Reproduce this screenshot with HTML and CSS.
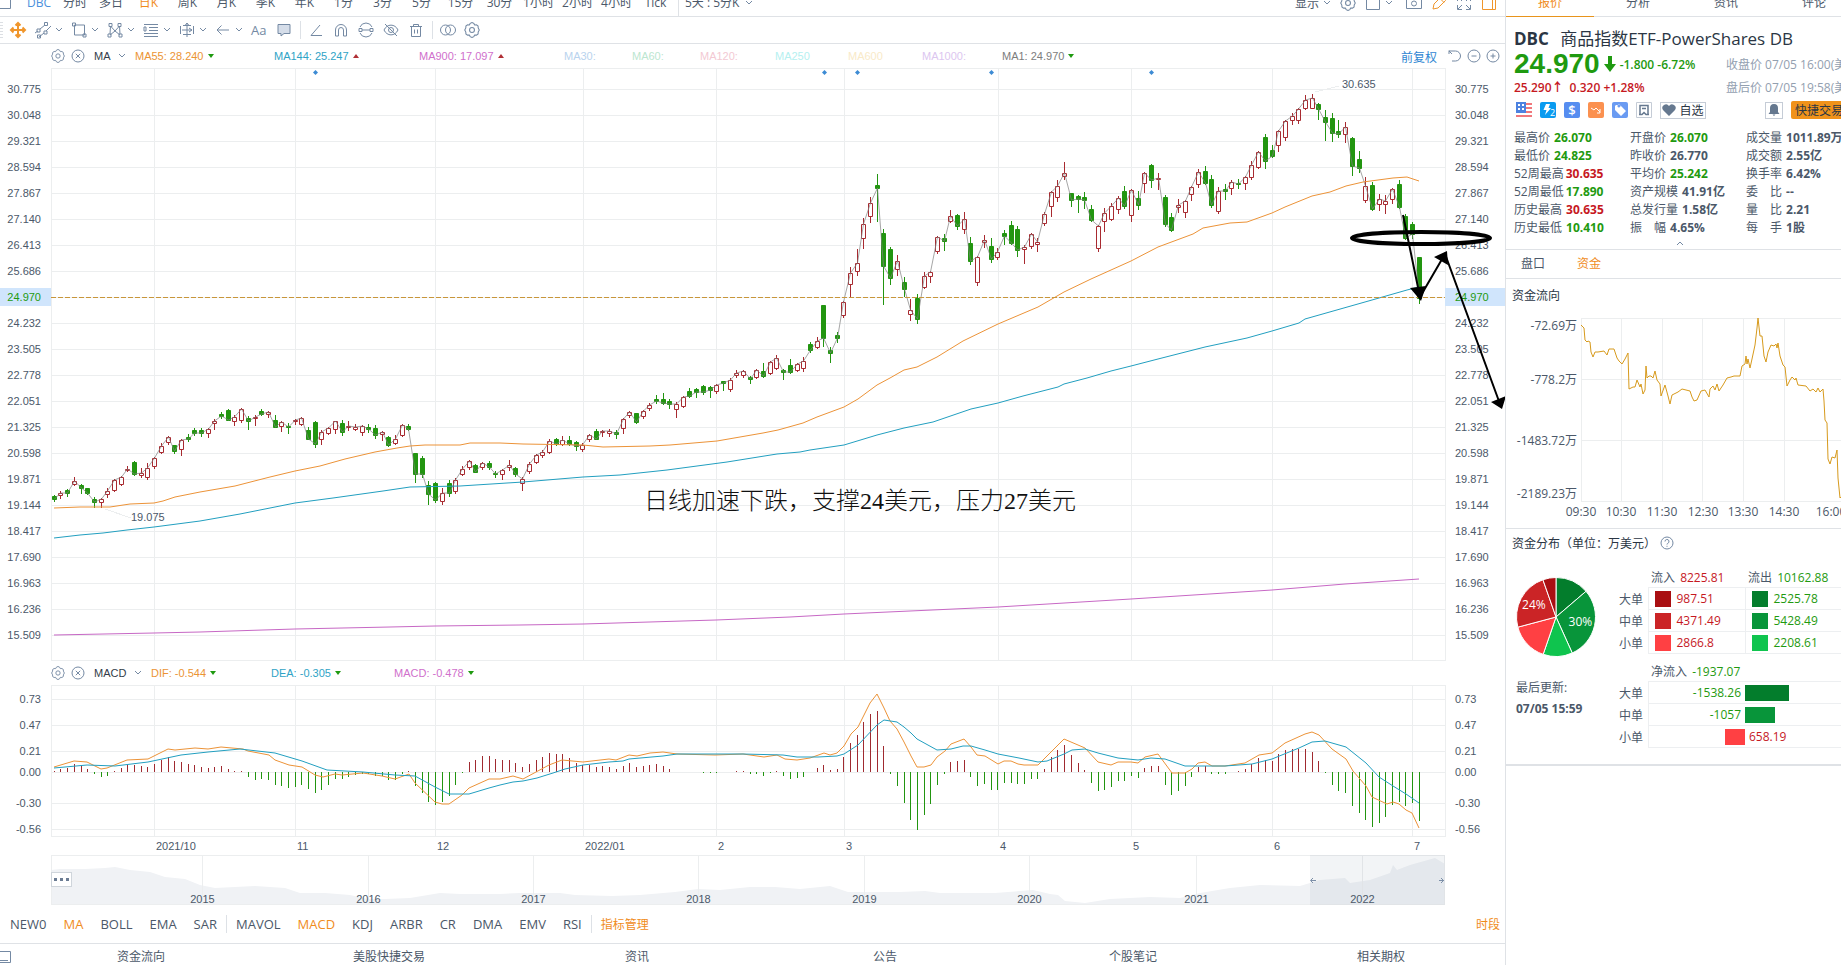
FILE: index.html
```html
<!DOCTYPE html>
<html lang="zh-CN">
<head>
  <meta charset="UTF-8">
  <meta name="viewport" content="width=device-width, initial-scale=1.0">
  <link rel="stylesheet" href="styles.css">
  <title>DBC 商品指数ETF-PowerShares DB</title>
</head>
<body>

<svg class="sprite" aria-hidden="true">
  <symbol id="chevron" viewBox="0 0 8 6"><path d="M1 1l3 3 3-3"/></symbol>
  <symbol id="gear" viewBox="0.5 0.5 15 15"><path d="M6.300 1.800 8 1l1.700.8.8 1.500 1.700-.1 1.500 1 .1 1.800 1 2-1 2-.1 1.800-1.500 1-1.700-.1-.8 1.500L8 15l-1.700-.8-.8-1.500-1.700.1-1.500-1-.1-1.800-1-2 1-2 .1-1.800 1.500-1 1.700.1z"/><circle cx="8" cy="8" r="2.300"/></symbol>
  <symbol id="close" viewBox="0 0 14 14"><circle cx="7" cy="7" r="6"/><path d="M4.800 4.800l4.400 4.400M9.200 4.800L4.800 9.200"/></symbol>
</svg>

<div class="app">
  <main class="main">
    <nav class="topbar">
      <svg class="corner" viewBox="0 0 12 28"><path d="M0 8.500h10.500v12H0"/></svg>
      <button class="period narrow blue">DBC</button>
      <button class="period narrow">分时</button>
      <button class="period narrow">多日</button>
      <button class="period active">日K</button>
      <button class="period">周K</button>
      <button class="period">月K</button>
      <button class="period">季K</button>
      <button class="period">年K</button>
      <button class="period">1分</button>
      <button class="period">3分</button>
      <button class="period">5分</button>
      <button class="period">15分</button>
      <button class="period">30分</button>
      <button class="period">1小时</button>
      <button class="period">2小时</button>
      <button class="period">4小时</button>
      <button class="period">Tick</button>
      <button class="period custom">5天 : 5分K <svg class="chev"><use href="#chevron"/></svg></button>
      <div class="top-right">
        <button>显示 <svg class="chev"><use href="#chevron"/></svg></button>
        <button aria-label="设置"><svg class="ic"><use href="#gear"/></svg></button>
        <button class="layout" aria-label="布局"><svg class="ic" viewBox="0 0 16 16"><path d="M1.500 1.500h13v13h-13z"/></svg> <svg class="chev"><use href="#chevron"/></svg></button>
        <button aria-label="截图"><svg class="ic" viewBox="0 0 16 16"><path d="M.5 3.500h4l1-2h5l1 2h4v10H.5z"/><circle cx="8" cy="8.500" r="2.500"/></svg></button>
        <button aria-label="画线"><svg class="ic orange" viewBox="0 0 16 16"><path d="M2 14l1-5 7.500-7.500a2 2 0 0 1 3 0l1 1a2 2 0 0 1 0 3L7 13zM9 3.500l4 4"/></svg></button>
        <button aria-label="全屏"><svg class="ic" viewBox="0 0 16 16"><path d="M1.500 6V1.500H6M10 1.500h4.500V6M14.500 10v4.500H10M6 14.500H1.500V10M2 2l4 4M14 2l-4 4M14 14l-4-4M2 14l4-4"/></svg></button>
        <button aria-label="侧栏"><svg class="ic orange" viewBox="0 0 16 16"><path d="M1.500 1.500h13v13h-13zM11.500 1.500v13"/></svg></button>
      </div>
    </nav>

    <div class="toolbar">
      <span class="grip"></span>
      <button class="tool move" aria-label="移动"><svg class="ti orange" viewBox="0 0 18 18"><path d="M9 2v14M2 9h14M6.500 4.500L9 2l2.500 2.500M6.500 13.500L9 16l2.500-2.500M4.500 6.500L2 9l2.500 2.500M13.500 6.500L16 9l-2.500 2.500"/></svg></button>
      <button class="tool drop" aria-label="线段"><svg class="ti" viewBox="0 0 18 18"><path d="M1 12l3-2M6 8l5-4M5 16l5-4M12 10l5-5M3 8h3v3H3zM10.500 1.500h3v3h-3zM3.500 14h3v3h-3zM10 10h3v3h-3z"/></svg><svg class="chev"><use href="#chevron"/></svg></button>
      <button class="tool drop" aria-label="形状"><svg class="ti" viewBox="0 0 18 18"><path d="M4.500 4h10v10h-10zM2.500 2h3v3h-3zM13 13h3v3h-3z"/></svg><svg class="chev"><use href="#chevron"/></svg></button>
      <button class="tool drop" aria-label="形态"><svg class="ti" viewBox="0 0 18 18"><path d="M4 13L4.500 5 9 10l4.500-5 .5 8M4 14l5-4 5 4M3 2.500h3v3H3zM12 2.500h3v3h-3zM2 13h3v3H2zM13 13h3v3h-3z"/></svg><svg class="chev"><use href="#chevron"/></svg></button>
      <button class="tool drop" aria-label="斐波那契"><svg class="ti" viewBox="0 0 18 18"><path d="M2 3.500h14M7 6.500h9M7 9.500h9M2 12.500h14M2 15.500h14M2 6h2v4H2z"/></svg><svg class="chev"><use href="#chevron"/></svg></button>
      <button class="tool drop" aria-label="测量"><svg class="ti" viewBox="0 0 18 18"><path d="M2.500 5v8M15.500 5v8M4 9h10M9 2v14M5 4.500h8M5 13.500h8M11 7l3 2-3 2M7 4.500L9 2l2 2.500"/></svg><svg class="chev"><use href="#chevron"/></svg></button>
      <button class="tool drop" aria-label="箭头"><svg class="ti" viewBox="0 0 18 18"><path d="M15 9H3M7.500 4.500L3 9l4.500 4.500"/></svg><svg class="chev"><use href="#chevron"/></svg></button>
      <button class="tool text">Aa</button>
      <button class="tool" aria-label="批注"><svg class="ti fill" viewBox="0 0 18 18"><path d="M3 3.500h12v9H9l-3 2.500v-2.500H3z"/></svg></button>
      <span class="sep"></span>
      <button class="tool" aria-label="角度"><svg class="ti" viewBox="0 0 18 18"><path d="M13 4L4 14.500h11"/></svg></button>
      <button class="tool" aria-label="磁铁"><svg class="ti" viewBox="0 0 18 18"><path d="M3.500 15V9a5.500 5.500 0 0 1 11 0v6h-3V9a2.500 2.500 0 0 0-5 0v6z"/></svg></button>
      <button class="tool" aria-label="连续画线"><svg class="ti" viewBox="0 0 18 18"><path d="M3 6a6.500 6.500 0 0 1 12 0M15 12a6.500 6.500 0 0 1-12 0M5 9h8M2 7.500h3v3H2zM13 7.500h3v3h-3z"/></svg></button>
      <button class="tool" aria-label="隐藏"><svg class="ti" viewBox="0 0 18 18"><path d="M2 9c3-6.500 11-6.500 14 0-3 6.500-11 6.500-14 0zM3 3l12 12"/><circle cx="9" cy="9" r="2.500"/></svg></button>
      <button class="tool" aria-label="删除"><svg class="ti" viewBox="0 0 18 18"><path d="M3 5.500h12M6.500 5.500v-2h5v2M4.500 5.500v10h9v-10M7.500 8.500v4M10.500 8.500v4"/></svg></button>
      <span class="sep"></span>
      <button class="tool" aria-label="对比"><svg class="ti" viewBox="0 0 18 18"><circle cx="6.500" cy="9" r="5"/><circle cx="11.500" cy="9" r="5"/></svg></button>
      <button class="tool" aria-label="设置"><svg class="ic"><use href="#gear"/></svg></button>
    </div>

    <div class="legend">
      <button aria-label="设置"><svg class="ic small"><use href="#gear"/></svg></button>
      <button aria-label="关闭"><svg class="ic small"><use href="#close"/></svg></button>
      <label class="picker"><select aria-label="主图指标"><option>MA</option></select><svg class="chev"><use href="#chevron"/></svg></label>
      <div class="values ma">
        <span class="c-orange">MA55: 28.240 <i class="down"></i></span>
        <span class="c-cyan">MA144: 25.247 <i class="up"></i></span>
        <span class="c-violet">MA900: 17.097 <i class="up"></i></span>
        <span class="ma30">MA30:</span>
        <span class="ma60">MA60:</span>
        <span class="ma120">MA120:</span>
        <span class="ma250">MA250</span>
        <span class="ma600">MA600</span>
        <span class="ma1000">MA1000:</span>
        <span class="c-gray">MA1: 24.970 <i class="down"></i></span>
      </div>
      <div class="zoom">
        <button class="adjust">前复权</button>
        <button aria-label="重置"><svg class="ic small" viewBox="0 0 14 14"><path d="M1 2h6.500a5 5 0 0 1 0 10H4M1 1.500V5M1 2l3 3"/></svg></button>
        <button aria-label="缩小"><svg class="ic small" viewBox="0 0 14 14"><circle cx="7" cy="7" r="6"/><path d="M4.500 7h5"/></svg></button>
        <button aria-label="放大"><svg class="ic small" viewBox="0 0 14 14"><circle cx="7" cy="7" r="6"/><path d="M4.500 7h5M7 4.500v5"/></svg></button>
      </div>
    </div>

    <svg id="price" class="chart" viewBox="0 68 1505 593"></svg>

    <div class="legend">
      <button aria-label="设置"><svg class="ic small"><use href="#gear"/></svg></button>
      <button aria-label="关闭"><svg class="ic small"><use href="#close"/></svg></button>
      <label class="picker"><select aria-label="副图指标"><option>MACD</option></select><svg class="chev"><use href="#chevron"/></svg></label>
      <div class="values macd">
        <span class="c-orange">DIF: -0.544 <i class="down"></i></span>
        <span class="c-cyan">DEA: -0.305 <i class="down"></i></span>
        <span class="c-violet">MACD: -0.478 <i class="down"></i></span>
      </div>
    </div>

    <svg id="macd" class="chart" viewBox="0 685 1505 170"></svg>
    <svg id="navigator" class="chart" viewBox="0 855 1505 52"></svg>

    <div class="indicators">
      <button>NEW0</button>
      <button class="active">MA</button>
      <button>BOLL</button>
      <button>EMA</button>
      <button>SAR</button>
      <span class="sep"></span>
      <button>MAVOL</button>
      <button class="active">MACD</button>
      <button>KDJ</button>
      <button>ARBR</button>
      <button>CR</button>
      <button>DMA</button>
      <button>EMV</button>
      <button>RSI</button>
      <span class="sep"></span>
      <button class="active manage">指标管理</button>
      <button class="active manage session">时段</button>
    </div>

    <nav class="bottom-tabs">
      <svg class="corner" viewBox="0 0 17 27"><path d="M0 7.500h10.500v11H0M0 16.500h8"/></svg>
      <a href="#">资金流向</a>
      <a href="#">美股快捷交易</a>
      <a href="#">资讯</a>
      <a href="#">公告</a>
      <a href="#">个股笔记</a>
      <a href="#">相关期权</a>
    </nav>
  </main>

  <aside class="side">
    <div class="side-inner">
      <nav class="side-tabs">
        <a href="#" class="active">报价</a>
        <a href="#">分析</a>
        <a href="#">资讯</a>
        <a href="#">评论</a>
      </nav>

      <section class="quote">
        <h1><b>DBC</b> 商品指数ETF-PowerShares DB</h1>
        <div class="last green">
          <b>24.970</b>
          <svg viewBox="0 0 12 16"><path d="M4 0h4v8h4l-6 8-6-8h4z"/></svg>
          <span>-1.800 -6.72%</span>
          <time>收盘价 07/05 16:00(美东)</time>
        </div>
        <div class="after red">
          <span>25.290↑</span><span>0.320 +1.28%</span>
          <time>盘后价 07/05 19:58(美东)</time>
        </div>
        <div class="badges">
          <svg viewBox="0 0 16 16"><path fill="#fff" d="M0 0h16v16H0z"/><path fill="#f0787c" d="M10 1h6v2h-6zM10 5h6v2h-6zM10 9h6v2h-6zM0 13h16v2H0z"/><path fill="#4d82e0" d="M0 0h10v11H0z"/><path fill="#fff" d="M2 2h2v2H2zM6 2h2v2H6zM2 6h2v2H2zM6 6h2v2H6z"/></svg>
          <svg viewBox="0 0 16 16"><rect width="16" height="16" rx="2" fill="#0a9bf0"/><path fill="#fff" d="M6 2h4L8.500 6H11l-6 7 1.500-5H3.500z"/><text x="10" y="14" font-size="9" fill="#fff">2</text></svg>
          <svg viewBox="0 0 16 16"><rect width="16" height="16" rx="2" fill="#568df0"/><text x="8" y="13" text-anchor="middle" font-size="13" font-weight="600" fill="#fff">$</text></svg>
          <svg viewBox="0 0 16 16"><rect width="16" height="16" rx="2" fill="#fb9150"/><path d="M3 6l3 2 2-2 4 4M12 7v4H9" fill="none" stroke="#fff"/></svg>
          <svg viewBox="0 0 16 16"><rect width="16" height="16" rx="2" fill="#6a9bf2"/><path fill="#fff" fill-rule="evenodd" d="M3 4l1-1h4l6 6-5 5-6-6zM7 5.500a1.500 1.500 0 1 0-.1 0z"/></svg>
          <svg viewBox="0 0 16 16"><path d="M.5.5h15v15H.5z" fill="#fff" stroke="#c5ccd6"/><path d="M4 12V3.500h8V12M3 12.500h3l2-2 2 2h3M6 6.500h4" fill="none" stroke="#65788f" stroke-width="1.500"/></svg>
          <button class="fav"><svg viewBox="0 0 14 12"><path fill="#65788f" d="M7 12L1 6a3.400 3.400 0 0 1 6-4 3.400 3.400 0 0 1 6 4z"/></svg>自选</button>
          <button class="bell" aria-label="提醒"><svg viewBox="0 0 12 12"><path fill="#65788f" d="M6 0c3 0 4 2 4 4v4l1.500 2H.5L2 8V4c0-2 1-4 4-4zM4.500 10.500h3L6 12z"/></svg></button>
          <button class="trade">快捷交易</button>
        </div>

        <dl class="stats">
          <div><dt>最高价</dt><dd class="green">26.070</dd></div>
          <div><dt>开盘价</dt><dd class="green">26.070</dd></div>
          <div><dt>成交量</dt><dd>1011.89万</dd></div>
          <div><dt>最低价</dt><dd class="green">24.825</dd></div>
          <div><dt>昨收价</dt><dd>26.770</dd></div>
          <div><dt>成交额</dt><dd>2.55亿</dd></div>
          <div class="tight"><dt>52周最高</dt><dd class="red">30.635</dd></div>
          <div><dt>平均价</dt><dd class="green">25.242</dd></div>
          <div><dt>换手率</dt><dd>6.42%</dd></div>
          <div class="tight"><dt>52周最低</dt><dd class="green">17.890</dd></div>
          <div><dt>资产规模</dt><dd>41.91亿</dd></div>
          <div><dt>委&emsp;比</dt><dd>--</dd></div>
          <div><dt>历史最高</dt><dd class="red">30.635</dd></div>
          <div><dt>总发行量</dt><dd>1.58亿</dd></div>
          <div><dt>量&emsp;比</dt><dd>2.21</dd></div>
          <div><dt>历史最低</dt><dd class="green">10.410</dd></div>
          <div><dt>振&emsp;幅</dt><dd>4.65%</dd></div>
          <div><dt>每&emsp;手</dt><dd>1股</dd></div>
        </dl>
        <button class="collapse" aria-label="收起"><svg class="chev flip"><use href="#chevron"/></svg></button>
      </section>

      <nav class="sub-tabs">
        <a href="#">盘口</a>
        <a href="#" class="active">资金</a>
      </nav>

      <section class="flow">
        <h2>资金流向</h2>
        <svg id="flow" class="chart" viewBox="1506 311 352 217"></svg>
      </section>

      <section class="dist">
        <h2>资金分布（单位：万美元） <svg class="help" viewBox="0 0 14 14"><circle cx="7" cy="7" r="6"/><path d="M5 5.500a2 2 0 1 1 2.800 1.800c-.6.300-.8.600-.8 1.200M7 9.800v1"/></svg></h2>
        <div class="dist-body">
          <div class="dist-left">
            <svg id="pie" viewBox="-40 -40 80 80"></svg>
            <p>最后更新:</p>
            <p><b>07/05 15:59</b></p>
          </div>
          <div class="dist-right">
            <table>
              <colgroup><col class="col-name"><col class="col-in"><col></colgroup>
              <thead>
                <tr><th></th><th>流入 <span class="red">8225.81</span></th><th>流出 <span class="green">10162.88</span></th></tr>
              </thead>
              <tbody>
                <tr><th>大单</th><td class="red"><i class="sw r1"></i>987.51</td><td class="green"><i class="sw g1"></i>2525.78</td></tr>
                <tr><th>中单</th><td class="red"><i class="sw r2"></i>4371.49</td><td class="green"><i class="sw g2"></i>5428.49</td></tr>
                <tr><th>小单</th><td class="red"><i class="sw r3"></i>2866.8</td><td class="green"><i class="sw g3"></i>2208.61</td></tr>
              </tbody>
            </table>
            <table class="net">
              <colgroup><col class="col-name"><col class="col-in"><col></colgroup>
              <thead>
                <tr><th></th><th colspan="2">净流入 <span class="green">-1937.07</span></th></tr>
              </thead>
              <tbody>
                <tr><th>大单</th><td class="neg green">-1538.26</td><td><i class="bar g1" style="width:44px"></i></td></tr>
                <tr><th>中单</th><td class="neg green">-1057</td><td><i class="bar g2" style="width:30px"></i></td></tr>
                <tr><th>小单</th><td class="neg"><i class="bar r3" style="width:20px"></i></td><td class="pos red">658.19</td></tr>
              </tbody>
            </table>
          </div>
        </div>
      </section>
    </div>
  </aside>
</div>

<script src="script.js"></script>
</body>
</html>
```
FILE: styles.css
```css
* {
  box-sizing: border-box;
}

body {
  margin: 0;
  font-family: "Open Sans", "Noto Sans CJK SC", sans-serif;
  font-size: 12px;
  color: #4b5869;
  background-color: #fff;
}

button,
select {
  border: none;
  padding: 0;
  margin: 0;
  background: none;
  font: inherit;
  color: inherit;
  cursor: pointer;
}

a {
  color: inherit;
  text-decoration: none;
}

i {
  font-style: normal;
}

svg {
  display: block;
  flex: none;
}

h1, h2, p, dl, dd {
  margin: 0;
}

.sprite {
  position: absolute;
  width: 0;
  height: 0;
}

.app {
  display: flex;
  height: 100vh;
  overflow: hidden;
}

.main {
  flex: 1;
  min-width: 0;
}

.green { color: #1f9a10; }
.red { color: #c6191f; }
.c-orange { color: #eb9434; }
.c-cyan { color: #2fa3c6; }
.c-violet { color: #d070cc; }
.c-gray { color: #7d7d7d; }

/* icons */
.ic, .ti, .chev, .corner, .help {
  fill: none;
  stroke: #7489a3;
  stroke-width: 1;
}

.ic { width: 16px; height: 16px; }
.ic.small { width: 14px; height: 14px; }
.ti { width: 18px; height: 18px; }
.chev { width: 8px; height: 6px; }
.chev.flip { transform: rotate(180deg); }
.orange { stroke: #f0962c; }
.ti.orange { stroke-width: 2; }
.ti.fill { fill: #d5dde9; }

.sep {
  width: 1px;
  height: 18px;
  background-color: #dde1e6;
}

/* period bar, scrolled partly out of view */
.topbar {
  display: flex;
  align-items: flex-end;
  height: 17px;
  overflow: hidden;
  border-bottom: 1px solid #dfe2e6;
}

.topbar .corner {
  width: 12px;
  height: 28px;
  margin-right: 9px;
}

.period {
  width: 39px;
  line-height: 26px;
  flex: none;
  white-space: nowrap;
}

.period.narrow { width: 36px; }
.period.blue { color: #4a90dc; }
.period.active { color: #f08c1c; }

.period.custom {
  display: flex;
  align-items: center;
  gap: 6px;
  width: auto;
  margin-left: 3px;
  padding-left: 6px;
  border-left: 1px solid #dfe2e6;
}

.top-right {
  display: flex;
  align-items: center;
  gap: 9px;
  height: 26px;
  margin-left: auto;
  padding-right: 8px;
}

.top-right button {
  display: flex;
  align-items: center;
  gap: 4px;
}

.top-right .layout { margin-right: 4px; }

.toolbar {
  display: flex;
  align-items: center;
  height: 27px;
  border-bottom: 1px solid #dfe2e6;
}

.grip {
  width: 3px;
  height: 16px;
  margin-right: 6px;
  background: repeating-linear-gradient(#dcdfe3 0 1px, #fff 1px 3px);
}

.tool {
  display: flex;
  align-items: center;
  width: 25px;
}

.tool.drop {
  width: 36px;
  gap: 3px;
}

.tool.text {
  padding-left: 1px;
  color: #7489a3;
  font-size: 13px;
}

.toolbar .sep {
  margin-right: 6px;
}

/* legends */
.legend {
  display: flex;
  align-items: center;
  gap: 6px;
  height: 24px;
  padding: 0 5px 0 51px;
  font-family: "Liberation Sans", "Noto Sans CJK SC", sans-serif;
  font-size: 11px;
}

.picker {
  display: flex;
  align-items: center;
  gap: 7px;
  margin-left: 3px;
}

.picker select {
  appearance: none;
  color: #333c49;
}

.values {
  display: grid;
  margin-left: 3px;
  white-space: nowrap;
}

.values.ma { grid-template-columns: 139px 145px 145px 68px 68px 75px 73px 74px 80px auto; }
.values.macd { grid-template-columns: 120px 123px auto; }

.up, .down {
  display: inline-block;
  margin: 0 0 2px 1px;
  border: 3px solid transparent;
}

.up { border-top: 0; border-bottom: 4px solid #b02f35; }
.down { border-bottom: 0; border-top: 4px solid #1f9a10; }

.ma30 { color: #b9d3ee; }
.ma60 { color: #bce6d0; }
.ma120 { color: #f3c9d3; }
.ma250 { color: #b5f0f0; }
.ma600 { color: #f9eac8; }
.ma1000 { color: #dcc6f0; }

.zoom {
  display: flex;
  align-items: center;
  gap: 5px;
  margin-left: auto;
}

.zoom .adjust {
  margin-right: 6px;
  font-size: 12px;
  color: #2f86d2;
}

/* charts */
.chart {
  width: 100%;
  height: auto;
  overflow: visible;
}

.chart text {
  font-family: "Liberation Sans", sans-serif;
  font-size: 11px;
  fill: #4b5869;
}

.chart .end { text-anchor: end; }
.chart .mid { text-anchor: middle; }
.chart .now { fill: #1f9a10; }

.chart .note {
  font-family: "Liberation Serif", "Noto Sans CJK SC", serif;
  font-size: 24px;
  font-weight: 300;
  fill: #111;
}

#flow text {
  font-family: "Open Sans", "Noto Sans CJK SC", sans-serif;
  font-size: 12px;
}

.grid { fill: none; stroke: #eceeef; shape-rendering: crispEdges; }
.line { fill: none; stroke-width: 1; }
.l-ma { stroke: #ec9338; }
.l-slow { stroke: #229fc0; }
.l-long { stroke: #c768c5; }
.l-close { stroke: #808080; stroke-opacity: 0.7; }
.l-flow { stroke: #d79a1c; }
.l-last { stroke: #c8963a; stroke-dasharray: 5 2; }
.k-up { fill: none; stroke: #a82a30; }
.k-down { fill: #229510; stroke: #229510; }
.bars-up { stroke: #a02a30; fill: none; }
.bars-down { stroke: #229510; fill: none; }
.band { fill: #d0e5fc; }
.area { fill: #f0f2f5; }
.range { fill: #8296aa; fill-opacity: 0.1; }
.handle { fill: #fff; stroke: #cfd5db; }
.draw { fill: none; stroke: #000; stroke-width: 2; }
.draw.ring { stroke-width: 4; }
.draw-head { fill: #000; }

/* indicator switches */
.indicators {
  display: flex;
  align-items: center;
  gap: 17px;
  height: 37px;
  padding: 0 5px 2px 10px;
  border-bottom: 1px solid #dfe2e6;
  font-size: 13px;
}

.indicators .sep { margin: 0 -8px; }
.indicators .active { color: #f08c1c; }
.indicators .manage { font-size: 12px; }
.indicators .session { margin-left: auto; }

.bottom-tabs {
  display: flex;
  height: 27px;
  line-height: 26px;
}

.bottom-tabs .corner {
  width: 17px;
  height: 27px;
}

.bottom-tabs a {
  flex: 1;
  text-align: center;
}

/* side panel */
.side {
  flex: 0 0 336px;
  overflow: hidden;
  border-left: 1px solid #dfe2e6;
}

.side-inner {
  width: 352px;
}

.side-tabs {
  display: flex;
  align-items: flex-end;
  height: 17px;
  overflow: hidden;
}

.side-tabs a {
  flex: 1;
  line-height: 26px;
  text-align: center;
  border-bottom: 1px solid #dfe2e6;
}

.side-tabs .active,
.sub-tabs .active {
  color: #f08c1c;
}

.side-tabs .active { border-bottom-color: #e8941c; }

.quote {
  padding: 10px 0 0 8px;
  border-bottom: 1px solid #dfe2e6;
}

.quote h1 {
  line-height: 24px;
  font-size: 17px;
  font-weight: 400;
  color: #2b3644;
  white-space: nowrap;
}

.quote h1 b { margin-right: 7px; }

.last {
  display: flex;
  align-items: center;
  height: 26px;
  font-weight: 600;
}

.last b {
  font-family: "Liberation Sans", sans-serif;
  font-size: 28px;
}

.last svg {
  width: 12px;
  height: 16px;
  margin: 0 4px;
  fill: #1f9a10;
}

.after {
  display: flex;
  align-items: center;
  gap: 6px;
  height: 20px;
  font-weight: 600;
}

.quote time {
  position: absolute;
  margin-left: 212px;
  font-weight: 400;
  color: #93a0b0;
  white-space: nowrap;
}

.badges {
  display: flex;
  align-items: center;
  gap: 8px;
  height: 26px;
  padding-left: 2px;
}

.badges > svg {
  width: 16px;
  height: 16px;
}

.badges button {
  display: flex;
  align-items: center;
  justify-content: center;
  height: 17px;
  border: 1px solid #c5ccd6;
  color: #2b3644;
}

.fav { width: 46px; gap: 3px; }
.fav svg { width: 14px; height: 12px; }
.bell { width: 18px; margin-left: 51px; }
.bell svg { width: 12px; height: 12px; }

.badges .trade {
  width: 56px;
  height: 18px;
  border: none;
  border-radius: 2px;
  background-color: #f0921a;
}

.stats {
  display: grid;
  grid-template-columns: 116px 116px 1fr;
  margin-top: 6px;
}

.stats div {
  display: flex;
  gap: 4px;
  line-height: 18px;
  white-space: nowrap;
}

.stats .tight { gap: 2px; }
.stats dd { font-weight: 700; }

.collapse {
  display: block;
  width: 100%;
  height: 12px;
  padding-left: 162px;
}

.sub-tabs {
  display: flex;
  gap: 32px;
  padding-left: 15px;
  line-height: 28px;
  border-bottom: 1px solid #dfe2e6;
}

.side h2 {
  display: flex;
  align-items: center;
  height: 32px;
  padding-left: 6px;
  font-size: 12px;
  font-weight: 400;
  color: #2b3644;
}

.flow { border-bottom: 1px solid #dfe2e6; }

.dist {
  padding-bottom: 16px;
  border-bottom: 2px solid #dfe2e6;
}

.side .dist h2 { height: 28px; }

.help {
  width: 14px;
  height: 14px;
  margin-left: 4px;
}

.dist-body {
  display: flex;
}

.dist-left {
  width: 113px;
  padding: 20px 0 0 10px;
  line-height: 21px;
}

#pie {
  width: 80px;
  height: 80px;
  margin-bottom: 20px;
}

#pie path { stroke: #fff; stroke-width: 1; }
#pie text { fill: #fff; font-size: 12px; text-anchor: middle; }

.dist-right {
  flex: 1;
  padding-top: 12px;
}

table {
  width: 100%;
  table-layout: fixed;
  border-collapse: collapse;
  white-space: nowrap;
}

.col-name { width: 29px; }
.col-in { width: 97px; }

table.net { margin-top: 9px; }

th, td {
  height: 22px;
  padding: 0;
  line-height: 18px;
  text-align: left;
  font-weight: 400;
}

thead th { height: 18px; }
thead th + th { padding-left: 3px; }
thead span { margin-left: 2px; }
tbody th { padding-top: 3px; }

tbody td {
  border: 1px solid #edeff1;
}

.net td { border-left: none; }

.net .neg {
  padding-right: 4px;
  text-align: right;
  border-left: 1px solid #edeff1;
  border-right: none;
}

.net .pos { padding-left: 4px; }

.sw, .bar {
  display: inline-block;
  width: 16px;
  height: 16px;
  vertical-align: middle;
}

.sw { margin: 0 6px; }
.net .neg .bar { margin-right: -4px; }

.r1 { background-color: #a90f12; }
.r2 { background-color: #cb2426; }
.r3 { background-color: #ff4043; }
.g1 { background-color: #037d2c; }
.g2 { background-color: #08953a; }
.g3 { background-color: #0fc44e; }
```
FILE: script.js
```js
// [high, body top, body bottom, low, 1 = up day] on the chart's own vertical scale
const candles = [
  [495,496,499,501,0],[491,493,495,498,1],[489,490,493,496,0],[477,481,484,485,1],[484,485,488,493,0],
  [488,488,493,494,0],[497,499,502,507,0],[498,499,502,507,1],[488,491,494,497,1],[479,480,490,491,1],
  [476,477,484,485,1],[466,469,470,471,1],[461,462,474,475,0],[468,473,475,477,1],[463,468,477,479,1],
  [457,458,466,468,1],[443,446,452,453,1],[436,437,442,444,1],[445,445,451,453,0],[439,440,449,455,1],
  [434,437,439,441,0],[428,430,433,435,0],[428,430,433,436,0],[428,429,433,437,1],[419,421,423,429,1],
  [412,414,416,418,0],[409,410,420,420,0],[415,417,421,425,1],[408,409,420,422,1],[416,418,421,429,0],
  [415,417,418,425,1],[409,411,414,415,0],[411,412,414,417,1],[415,420,427,427,0],[421,422,426,431,1],
  [423,426,427,433,0],[419,420,421,424,1],[417,418,424,425,1],[427,430,439,439,0],[421,422,444,447,0],
  [430,432,439,444,1],[427,428,433,434,1],[421,421,429,433,1],[420,423,432,435,0],[421,426,427,430,1],
  [424,427,429,430,1],[425,426,432,435,1],[424,427,429,432,0],[425,428,435,438,0],[431,432,434,440,1],
  [436,437,445,446,0],[435,439,443,444,1],[424,425,435,436,1],[424,426,429,430,0],[453,453,474,482,0],
  [456,458,474,477,0],[481,485,494,504,0],[482,483,500,502,0],[488,493,501,504,1],[480,483,493,496,0],
  [478,480,491,493,1],[466,469,474,475,1],[460,461,467,469,1],[464,465,472,472,0],[462,463,467,469,1],
  [461,463,467,469,0],[471,473,474,477,0],[469,470,474,479,1],[460,465,467,470,1],[467,468,474,476,0],
  [477,479,483,490,1],[462,464,471,473,1],[454,455,462,463,1],[450,452,455,457,1],[439,441,452,453,1],
  [438,439,444,445,0],[436,440,444,445,1],[436,440,444,445,0],[441,442,446,450,0],[443,445,449,451,1],
  [434,435,439,441,1],[429,431,439,439,0],[430,431,432,436,1],[429,431,433,436,1],[430,432,434,438,0],
  [418,419,428,433,1],[411,412,415,417,1],[413,413,422,423,0],[410,411,416,418,1],[403,405,408,410,1],
  [395,399,401,403,0],[393,399,403,404,0],[399,401,404,408,0],[402,404,409,417,1],[396,397,406,407,1],
  [388,391,396,397,0],[388,389,392,397,0],[385,386,392,394,0],[386,387,390,397,0],[384,385,391,393,1],
  [381,381,383,390,0],[378,380,389,391,1],[370,373,375,377,1],[370,371,375,377,1],[376,377,379,383,0],
  [369,370,377,378,1],[363,371,376,377,0],[361,362,373,374,1],[355,358,368,369,1],[369,370,372,379,0],
  [359,365,372,373,0],[363,364,370,371,1],[357,361,368,371,1],[342,344,350,352,0],[337,341,347,348,1],
  [305,305,338,346,0],[347,350,353,362,0],[332,335,338,342,0],[301,302,315,317,1],[267,273,284,296,1],
  [249,263,271,275,1],[218,224,238,248,1],[197,203,216,222,1],[174,185,188,221,0],[229,233,266,304,0],
  [247,249,278,284,0],[255,261,269,275,1],[277,282,289,296,0],[299,310,314,320,1],[294,298,319,323,0],
  [272,276,287,288,1],[271,272,276,282,1],[236,237,251,253,1],[234,238,241,250,0],[210,216,221,222,1],
  [214,215,226,229,0],[212,219,229,233,1],[237,243,261,264,0],[256,257,282,285,1],[235,240,242,247,1],
  [238,246,259,262,0],[248,252,257,259,1],[230,233,236,244,0],[221,225,243,244,0],[226,229,250,256,0],
  [245,247,249,263,1],[233,234,246,248,1],[238,242,244,251,1],[212,214,223,225,1],[191,192,206,216,1],
  [180,186,197,201,1],[162,173,176,179,1],[193,193,200,206,0],[195,196,199,212,0],[192,197,200,208,0],
  [205,209,220,221,0],[225,226,248,251,1],[208,213,221,231,1],[203,206,219,220,1],[196,198,209,213,1],
  [186,191,206,208,0],[189,190,215,221,1],[191,198,205,209,0],[172,173,183,192,1],[164,165,180,187,0],
  [173,178,179,189,1],[195,197,224,226,0],[213,217,230,231,0],[199,205,207,212,1],[200,201,212,217,1],
  [186,187,194,200,1],[169,172,184,187,1],[166,171,183,184,0],[175,179,205,207,0],[187,191,211,213,1],
  [184,189,191,199,0],[180,182,188,194,1],[179,183,184,188,0],[176,177,183,189,1],[161,165,177,179,1],
  [151,152,167,168,1],[134,137,161,168,0],[145,150,156,157,0],[130,131,145,151,1],[120,121,137,140,1],
  [113,116,120,124,1],[108,109,120,123,1],[95,100,108,109,1],[94,98,108,108,1],[103,104,109,119,0],
  [110,117,122,140,0],[113,118,133,141,0],[120,131,134,137,0],[122,127,134,142,1],[137,138,166,175,0],
  [151,159,168,172,0],[177,186,200,202,1],[182,185,209,210,0],[194,199,204,210,1],[195,201,204,213,1],
  [188,189,199,203,1],[180,184,207,208,0],[214,216,238,239,0],[222,224,234,238,0],[257,257,298,303,0]
];

const hist = [
  1,3,4,8,7,3,-2,-5,-4,1,4,8,7,6,5,8,12,15,11,10,8,7,5,4,5,6,3,1,1,-5,-8,-7,-8,-13,-14,-16,-15,-13,-17,-21,
  -18,-13,-7,-7,-5,-3,-2,-2,-4,-4,-8,-8,-2,1,-14,-21,-30,-33,-30,-24,-13,-1,10,12,16,16,13,12,12,9,
  5,8,12,15,19,18,18,14,9,7,7,5,6,5,3,6,9,5,6,7,8,6,3,0,0,0,0,-1,-1,-1,
  0,0,1,1,-2,-2,-4,-1,1,-4,-7,-6,-5,0,4,7,2,3,15,29,37,50,58,61,26,-2,-14,-31,-48,-58,-43,-32,-13,-2,10,11,12,-5,-14,-12,
  -18,-18,-11,-11,-12,-12,-7,-7,3,15,22,27,17,9,2,-11,-19,-18,-15,-9,-9,-4,-6,4,6,6,-13,-23,-19,-14,-5,5,6,-2,-2,-2,0,1,3,8,
  14,12,11,18,22,23,23,23,20,11,-1,-13,-19,-21,-34,-41,-48,-55,-51,-45,-33,-30,-34,-31,-49
];

const prices = ['30.775','30.048','29.321','28.594','27.867','27.140','26.413','25.686','24.970','24.232','23.505',
  '22.778','22.051','21.325','20.598','19.871','19.144','18.417','17.690','16.963','16.236','15.509'];

const ma55 = '54,508 80,507 110,507 130,504 154,503 163,501 175,497 200,492 235,486 270,477 295,471 320,466 345,459 375,452 397,448 410,446 425,445 460,445 470,443 500,443 523,444 583,445 603,447 650,446 670,445 717,441 763,433 778,430 803,423 817,417 844,407 858,399 877,385 890,378 904,370 917,367 937,357 963,341 998,324 1038,307 1064,292 1091,279 1131,261 1158,247 1193,234 1203,228 1230,223 1247,222 1272,213 1285,207 1312,196 1330,192 1346,186 1363,182 1393,178 1407,177 1419,181';
const ma144 = '54,538 80,535 103,533 127,530 154,527 200,521 240,514 295,503 333,498 383,491 410,487 460,486 523,482 583,477 620,475 667,470 727,462 777,454 800,452 810,450 844,445 877,435 904,428 933,422 971,409 998,403 1023,396 1058,387 1064,384 1087,378 1111,371 1131,366 1158,359 1205,347 1247,338 1272,331 1299,323 1305,319 1372,300 1407,290 1419,287';
const ma900 = '54,635 154,633 200,632 295,629 390,627 435,626 520,625 583,624 716,620 790,617 844,614 998,607 1131,599 1272,590 1345,584 1419,579';
const dif = '54,767 74,761 87,762 101,769 107,768 127,760 148,759 168,749 175,750 195,748 208,749 221,747 243,749 248,751 269,755 275,760 289,765 302,767 315,775 323,777 335,774 342,775 363,773 382,776 395,779 409,774 415,783 435,802 442,804 449,804 462,795 469,788 489,779 500,779 513,776 523,779 549,765 562,760 583,762 609,759 616,760 629,755 637,756 650,753 663,752 677,754 715,755 743,754 764,757 777,755 785,759 797,760 810,758 824,753 830,755 837,753 844,746 851,734 858,727 870,703 877,694 884,708 890,721 897,729 904,742 911,756 917,767 924,767 931,765 937,757 945,751 951,744 964,739 971,747 977,755 985,756 998,764 1004,761 1011,761 1018,764 1024,765 1038,765 1051,752 1064,739 1085,748 1098,762 1111,765 1118,762 1131,762 1138,763 1145,757 1158,754 1172,773 1185,773 1192,769 1198,763 1205,762 1212,766 1225,766 1245,763 1259,755 1272,753 1285,743 1305,734 1312,732 1319,735 1332,749 1346,759 1353,771 1366,786 1372,797 1387,804 1393,802 1399,804 1406,810 1412,813 1419,828';
const dea = '54,768 87,765 115,766 148,762 181,755 208,752 240,749 275,753 302,761 327,770 363,772 395,775 415,776 435,787 449,794 469,794 489,788 500,785 513,782 523,781 537,778 553,773 565,769 583,765 609,762 623,761 629,759 663,756 677,754 743,754 783,755 797,757 818,757 837,756 844,754 858,745 877,725 884,720 897,722 904,727 911,733 917,739 937,750 951,749 963,746 971,746 985,750 998,754 1019,758 1038,762 1047,761 1064,754 1072,750 1085,749 1098,753 1118,758 1138,760 1151,758 1165,759 1185,766 1225,766 1252,764 1272,759 1299,748 1312,742 1325,741 1346,747 1366,763 1379,777 1393,786 1406,794 1419,803';

const left = 51, right = 1445;
const months = [[154,'2021/10'],[295,'11'],[435,'12'],[583,'2022/01'],[716,'2'],[844,'3'],[998,'4'],[1131,'5'],[1272,'6'],[1412,'7']];

const xOf = i => Math.round(53.8 + i * 6.691) + 0.5;
const poly = (points, cls) => `<polyline class="line ${cls}" points="${points}"/>`;
const text = (x, y, s, cls = '') => `<text x="${x}" y="${y}" class="${cls}">${s}</text>`;

function gridPath(x1, x2, top, bottom, xs, ys) {
  let d = `M${x1}.5 ${top}.5H${x2}.5V${bottom}.5H${x1}.5z`;
  xs.forEach(x => d += `M${x}.5 ${top}V${bottom}`);
  ys.forEach(y => d += `M${x1} ${y}.5H${x2}`);
  return `<path class="grid" d="${d}"/>`;
}

function drawPrice() {
  const rowY = k => 89 + k * 26;

  let out = gridPath(left, right, 68, 660, months.map(m => m[0]), prices.map((p, k) => rowY(k)));
  out += `<rect class="band" x="0" y="288" width="51" height="18"/><rect class="band" x="1445" y="288" width="60" height="18"/>`;

  prices.forEach((s, k) => {
    const cls = k === 8 ? 'now' : '';
    out += text(41, rowY(k) + 4, s, 'end ' + cls) + text(1455, rowY(k) + 4, s, cls);
  });

  // wicks stop at the body so that up days stay hollow
  candles.forEach(([h, t, b, l, up], i) => {
    const x = xOf(i);
    out += `<path class="${up ? 'k-up' : 'k-down'}" d="M${x} ${h}V${t}M${x} ${b}V${l + 1}M${x - 2} ${t + 0.5}h4v${Math.max(b - t, 1)}h-4z"/>`;
  });

  out += poly(candles.map((c, i) => xOf(i) + ',' + (c[4] ? c[1] : c[2])).join(' '), 'l-close');
  out += poly(ma55, 'l-ma') + poly(ma144, 'l-slow') + poly(ma900, 'l-long');
  out += `<path class="line l-last" d="M51 297.5H1445"/>`;

  [315, 824, 857, 991, 1151].forEach(x => {
    out += `<path fill="#3d8bd4" d="M${x + 0.5} 70l2.500 2.500-2.500 2.500-2.500-2.500z"/>`;
  });

  out += `<path class="grid" d="M1315 92L1339 86M105 509L131 518"/>`;
  out += text(1342, 88, '30.635') + text(131, 521, '19.075');
  out += text(644, 509, '日线加速下跌，支撑24美元，压力27美元', 'note');

  // hand-drawn forecast
  out += `<ellipse class="draw ring" cx="1421" cy="238" rx="69" ry="6"/>
    <path class="draw" d="M1403 215L1420 297L1445 254L1500 404"/>
    <path class="draw-head" d="M1421 301L1410 288 1426 286zM1447 251L1434 257 1448 265zM1502 409L1491 402 1506 396z"/>`;
  document.getElementById('price').innerHTML = out;
}

function drawMacd() {
  const rows = [[699,'0.73'],[725,'0.47'],[751,'0.21'],[772,'0.00'],[803,'-0.30'],[829,'-0.56']];
  let out = gridPath(left, right, 685, 836, months.map(m => m[0]), rows.map(r => r[0]));
  rows.forEach(([y, s]) => out += text(41, y + 4, s, 'end') + text(1455, y + 4, s));
  let up = '', down = '';
  hist.forEach((v, i) => {
    const bar = `M${xOf(i)} 772v${-v}`;
    if (v > 0) up += bar; else if (v < 0) down += bar;
  });
  out += `<path class="bars-up" d="${up}"/><path class="bars-down" d="${down}"/>`;
  out += poly(dif, 'l-ma') + poly(dea, 'l-slow');
  months.forEach(([x, s]) => out += text(x + 2, 850, s));
  document.getElementById('macd').innerHTML = out;
}

function drawNavigator() {
  const years = [202, 368, 533, 698, 864, 1029, 1196, 1362];
  let out = `<polygon class="area" points="51,870 60,869 85,869 105,868 115,867 130,870 150,872 165,877 185,879 200,885 215,888 235,887 255,886 285,888 300,893 325,893 350,895 368,899 385,899 410,898 440,893 460,894 500,894 520,893 560,893 575,895 612,896 640,895 675,892 698,889 720,890 750,887 775,887 800,889 830,886 848,892 900,892 925,891 940,893 970,893 995,893 1020,891 1033,890 1050,894 1058,895 1065,901 1085,903 1110,899 1150,897 1180,898 1200,893 1230,888 1260,885 1300,886 1320,880 1345,878 1350,883 1370,880 1390,873 1393,865 1397,870 1410,865 1435,858 1445,864 1445,905 51,905"/>`;
  out += gridPath(left, right - 1, 855, 904, years, []);
  out += `<rect class="range" x="1310" y="855" width="135" height="50"/>`;
  years.forEach((x, i) => out += text(x + 0.5, 903, 2015 + i, 'mid'));
  out += `<rect class="handle" x="51.5" y="872.5" width="20" height="14"/>
    <path fill="#6b7c93" d="M54 878h3v3h-3zM60 878h3v3h-3zM66 878h3v3h-3z"/>
    <path class="line" stroke="#7c8fa8" d="M1316 880.500h-5M1313 878l-2.500 2.500 2.500 2.500M1439 880.500h5M1441 878l2.500 2.500-2.500 2.500"/>`;
  document.getElementById('navigator').innerHTML = out;
}

function drawFlow() {
  let out = gridPath(1581, 1850, 318, 501, [1621, 1662, 1702, 1743, 1784], [379, 440]);
  [[330,'-72.69万'],[384,'-778.2万'],[445,'-1483.72万'],[498,'-2189.23万']].forEach(([y, s]) => out += text(1577, y, s, 'end'));
  [[1581,'09:30'],[1621,'10:30'],[1662,'11:30'],[1703,'12:30'],[1743,'13:30'],[1784,'14:30'],[1831,'16:00']].forEach(([x, s]) => out += text(x, 516, s, 'mid'));
  out += poly('1581,325 1583,327 1584,328 1585,340 1587,342 1588,341 1590,342 1591,352 1593,357 1595,352 1598,352 1604,351 1607,355 1609,349 1614,349 1615,352 1617,358 1619,361 1622,364 1625,359 1626,357 1628,353 1629,389 1633,387 1635,387 1637,380 1640,387 1641,384 1643,394 1645,390 1646,366 1647,378 1649,376 1651,376 1653,378 1655,371 1657,380 1660,384 1661,396 1665,385 1668,396 1670,404 1672,395 1678,392 1682,389 1690,391 1692,397 1694,401 1697,400 1701,391 1705,390 1709,397 1710,389 1713,386 1715,390 1717,384 1719,391 1723,385 1727,378 1731,377 1734,376 1737,376 1740,376 1742,366 1745,364 1746,356 1747,364 1748,359 1750,368 1752,359 1755,345 1757,328 1758,318 1760,336 1762,336 1764,356 1766,362 1768,352 1771,345 1774,346 1776,344 1777,348 1778,343 1780,356 1783,365 1785,367 1787,386 1790,380 1792,377 1795,380 1796,378 1798,385 1806,386 1810,391 1813,389 1816,392 1818,388 1820,392 1823,389 1824,401 1825,420 1827,423 1828,459 1830,464 1832,457 1835,458 1837,450 1838,478 1840,498 1841,497', 'l-flow');
  document.getElementById('flow').innerHTML = out;
}

function drawPie() {
  const parts = [[2525.78,'#037d2c'],[5428.49,'#08953a','30%'],[2208.61,'#0fc44e'],[2866.8,'#ff4043'],[4371.49,'#cb2426','24%'],[987.51,'#a90f12']];
  const total = parts.reduce((sum, p) => sum + p[0], 0);
  let angle = -Math.PI / 2, out = '', labels = '';
  parts.forEach(([v, color, label]) => {
    const next = angle + v / total * Math.PI * 2;
    const mid = (angle + next) / 2;
    out += `<path fill="${color}" d="M0 0L${39.5 * Math.cos(angle)} ${39.5 * Math.sin(angle)}A39.5 39.5 0 0 1 ${39.5 * Math.cos(next)} ${39.5 * Math.sin(next)}z"/>`;
    if (label) labels += `<text x="${25 * Math.cos(mid)}" y="${25 * Math.sin(mid) + 4}">${label}</text>`;
    angle = next;
  });
  document.getElementById('pie').innerHTML = out + labels;
}

drawPrice();
drawMacd();
drawNavigator();
drawFlow();
drawPie();
```
